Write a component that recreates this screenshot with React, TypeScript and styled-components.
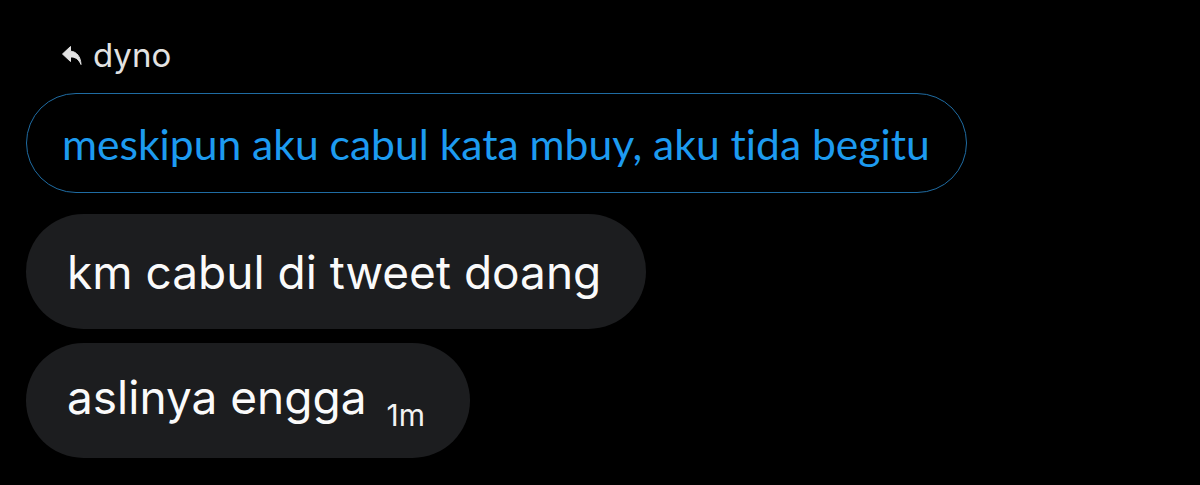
import React from "react";
import styled, { createGlobalStyle } from "styled-components";

const Global = createGlobalStyle`
  html, body { margin: 0; padding: 0; background: #000; }
  body { width: 1200px; height: 485px; overflow: hidden; }
`;

const Thread = styled.div`
  display: flex;
  flex-direction: column;
  align-items: flex-start;
  padding: 36px 0 0 26px;
  font-family: Inter, Roboto, "Liberation Sans", sans-serif;
`;

const ReplyHeader = styled.div`
  display: flex;
  align-items: center;
  gap: 11px;
  padding-left: 36px;
  height: 38px;
  color: #e2e2e2;
  font-size: 33px;
`;

const QuoteBubble = styled.div`
  margin-top: 19px;
  box-sizing: border-box;
  height: 100px;
  display: flex;
  align-items: center;
  padding: 0 36px 0 35px;
  border: 1.5px solid #1f6ca3;
  border-radius: 50px;
  color: #1d9bf0;
  font-family: Lato, "Liberation Sans", sans-serif;
  font-size: 42.6px;
  font-variant-ligatures: none;
`;

const Bubble = styled.div<{ $first?: boolean }>`
  margin-top: ${(p) => (p.$first ? 21 : 14)}px;
  box-sizing: border-box;
  height: 115px;
  display: flex;
  align-items: center;
  padding: 0 45px 0 41px;
  background: #1c1d1f;
  border-radius: 58px;
  color: #fafafa;
  font-size: 46px;
`;

const Text = styled.span`
  white-space: nowrap;
`;

const Time = styled.span`
  font-size: 30px;
  margin-left: 20px;
  vertical-align: -12px;
  color: #f2f2f2;
`;

const ReplyIcon = () => (
  <svg width="20" height="21" viewBox="0 0 20 21">
    <path
      d="M8.5 1.5 L0.5 9 L8.5 16.5 L8.5 12 C13 11.8 16.5 13.8 19 19.5 C18.6 11.5 14.5 6.6 8.5 6.2 Z"
      fill="#e2e2e2"
      stroke="#e2e2e2"
      strokeWidth="1"
      strokeLinejoin="round"
    />
  </svg>
);

export default function App() {
  return (
    <>
      <Global />
      <Thread>
        <ReplyHeader>
          <ReplyIcon />
          <span>dyno</span>
        </ReplyHeader>
        <QuoteBubble>meskipun aku cabul kata mbuy, aku tida begitu</QuoteBubble>
        <Bubble $first>
          <Text>km cabul di tweet doang</Text>
        </Bubble>
        <Bubble>
          <Text>
            aslinya engga<Time>1m</Time>
          </Text>
        </Bubble>
      </Thread>
    </>
  );
}
